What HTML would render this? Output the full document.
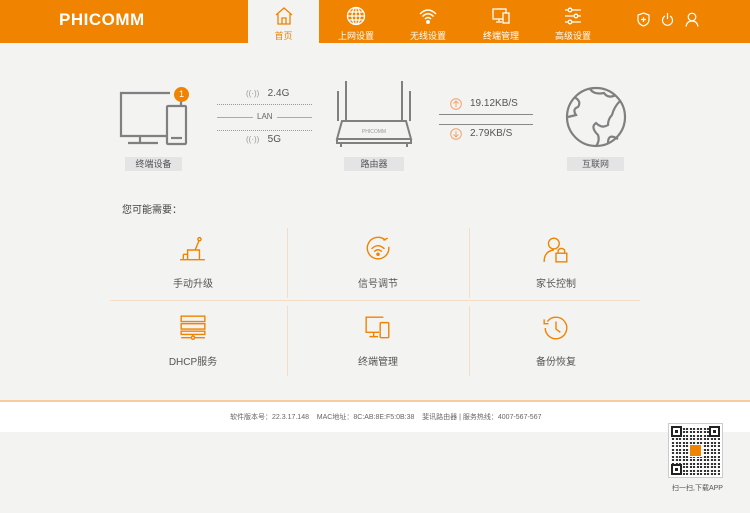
<!DOCTYPE html>
<html><head><meta charset="utf-8"><style>
*{margin:0;padding:0;box-sizing:border-box}
body{width:750px;height:513px;background:#f3f3f2;font-family:"Liberation Sans","Noto Sans CJK SC",sans-serif;position:relative;overflow:hidden;color:#555}
.hdr{position:absolute;left:0;top:0;width:750px;height:43px;background:#f08300}
.logo{position:absolute;left:59px;top:10px;color:#fff;font-weight:bold;font-size:17px;letter-spacing:0.5px}
.nav{position:absolute;top:0;height:43px;width:70px;text-align:center;color:#fff;font-size:9px}
.nav svg{display:block;margin:6px auto 3px}
.nav.act{background:#f3f3f2;color:#f08300;height:45px}
.hr{position:absolute;top:12px}
.abs{position:absolute}
.lbl{position:absolute;background:#e4e4e4;color:#555;font-size:9px;text-align:center;height:14px;line-height:14px}
.cell{position:absolute;width:160px;text-align:center;font-size:10px;color:#555}
.cell svg{display:block;margin:0 auto 11px}
</style></head><body>
<div class="hdr">
 <div class="logo">PHICOMM</div>
 <div class="nav act" style="left:248px;width:71px">
  <svg width="20" height="20" viewBox="0 0 20 20" fill="none" stroke="#f08300" stroke-width="1.3"><path d="M2 9 L10 2 L18 9 M4 8 V18 H16 V8 M8 18 V12 H12 V18"/></svg>首页</div>
 <div class="nav" style="left:321px">
  <svg width="20" height="20" viewBox="0 0 20 20" fill="none" stroke="#fff" stroke-width="1.3"><circle cx="10" cy="10" r="8.5"/><ellipse cx="10" cy="10" rx="4" ry="8.5"/><path d="M1.5 10H18.5M3 6H17M3 14H17M10 1.5V18.5"/></svg>上网设置</div>
 <div class="nav" style="left:393px">
  <svg width="20" height="20" viewBox="0 0 20 20" fill="none" stroke="#fff" stroke-width="1.5"><path d="M2 8 Q10 0 18 8 M4.5 10.5 Q10 5 15.5 10.5 M7 13 Q10 10 13 13"/><circle cx="10" cy="16" r="1.2" fill="#fff"/></svg>无线设置</div>
 <div class="nav" style="left:466px">
  <svg width="20" height="20" viewBox="0 0 20 20" fill="none" stroke="#fff" stroke-width="1.3"><rect x="2" y="3" width="13" height="10"/><path d="M8 13V16H5H11"/><rect x="12" y="7" width="6" height="10" fill="#f08300"/></svg>终端管理</div>
 <div class="nav" style="left:538px">
  <svg width="20" height="20" viewBox="0 0 20 20" fill="none" stroke="#fff" stroke-width="1.3"><path d="M2 4H18M2 10H18M2 16H18"/><circle cx="7" cy="4" r="1.8" fill="#f08300"/><circle cx="13" cy="10" r="1.8" fill="#f08300"/><circle cx="7" cy="16" r="1.8" fill="#f08300"/></svg>高级设置</div>
 <svg class="hr" style="left:637px" width="13" height="15" viewBox="0 0 13 15" fill="none" stroke="#fff" stroke-width="1.2"><path d="M6.5 1 L12 3 V8 Q12 12 6.5 14 Q1 12 1 8 V3Z M6.5 5V10M4 7.5H9"/></svg>
 <svg class="hr" style="left:661px" width="13" height="15" viewBox="0 0 13 15" fill="none" stroke="#fff" stroke-width="1.2"><path d="M4 4 A5 5 0 1 0 9 4 M6.5 1V7"/></svg>
 <svg class="hr" style="left:685px" width="14" height="15" viewBox="0 0 14 15" fill="none" stroke="#fff" stroke-width="1.2"><circle cx="7" cy="5" r="3.8"/><path d="M1 14.5 Q2 9 7 9 Q12 9 13 14.5"/></svg>
</div>

<svg class="abs" style="left:118px;top:86px" width="75" height="62" viewBox="0 0 75 62" fill="none" stroke="#808080" stroke-width="2.2"><path d="M52 7H3V50H48 M22 50V57H10H40"/><rect x="49" y="20" width="19" height="38" rx="1"/><path d="M53 52H64"/><path d="M63 14V20"/></svg>
<div class="abs" style="left:174px;top:87px;width:15px;height:15px;border-radius:50%;background:#f08300;color:#fff;font-size:9px;text-align:center;line-height:15px">1</div>
<div class="lbl" style="left:125px;top:157px;width:57px">终端设备</div>

<div class="abs" style="left:246px;top:88px;font-size:10px;color:#555"><span style="font-size:8px;color:#999">((·))</span>&nbsp;&nbsp;&nbsp;2.4G</div>
<div class="abs" style="left:217px;top:104px;width:95px;border-top:1px dotted #999"></div>
<div class="abs" style="left:217px;top:117px;width:95px;border-top:1px solid #aaa"></div>
<div class="abs" style="left:253px;top:112px;background:#f3f3f2;padding:0 4px;font-size:8px;color:#666">LAN</div>
<div class="abs" style="left:217px;top:130px;width:95px;border-top:1px dotted #999"></div>
<div class="abs" style="left:246px;top:134px;font-size:10px;color:#555"><span style="font-size:8px;color:#999">((·))</span>&nbsp;&nbsp;&nbsp;5G</div>

<svg class="abs" style="left:333px;top:79px" width="82" height="70" viewBox="0 0 82 70" fill="none" stroke="#808080" stroke-width="2"><path d="M5 12V42M13 2V42M69 2V42M77 12V42"/><path d="M9 42H73L78 60H4Z"/><path d="M4 60V64H78V60M8 64V68M74 64V68"/><text x="41" y="54" font-size="5" fill="#999" stroke="none" text-anchor="middle" font-family="Liberation Sans">PHICOMM</text></svg>
<div class="lbl" style="left:344px;top:157px;width:60px">路由器</div>

<svg class="abs" style="left:450px;top:98px" width="12" height="12" viewBox="0 0 12 12" fill="none" stroke="#f5a36a" stroke-width="1"><circle cx="6" cy="6" r="5.3"/><path d="M6 9V3M3.5 5.5L6 3L8.5 5.5"/></svg>
<div class="abs" style="left:470px;top:98px;font-size:10px;color:#555">19.12KB/S</div>
<div class="abs" style="left:439px;top:114px;width:94px;border-top:1px solid #888"></div>
<div class="abs" style="left:439px;top:124px;width:94px;border-top:1px solid #888"></div>
<svg class="abs" style="left:450px;top:128px" width="12" height="12" viewBox="0 0 12 12" fill="none" stroke="#f5a36a" stroke-width="1"><circle cx="6" cy="6" r="5.3"/><path d="M6 3V9M3.5 6.5L6 9L8.5 6.5"/></svg>
<div class="abs" style="left:470px;top:128px;font-size:10px;color:#555">2.79KB/S</div>

<svg class="abs" style="left:564px;top:85px" width="64" height="64" viewBox="0 0 64 64" fill="none" stroke="#808080" stroke-width="2.2"><circle cx="32" cy="32" r="29"/><path d="M10 12 Q18 16 14 22 Q8 24 12 30 L4 32 M26 4 Q30 10 40 8 Q44 14 52 10 M56 16 Q50 22 48 30 Q44 34 44 40 Q38 44 32 38 Q26 42 34 50 Q36 56 32 61 M44 58 Q44 50 50 52 L54 54"/></svg>
<div class="lbl" style="left:567px;top:157px;width:57px">互联网</div>

<div class="abs" style="left:122px;top:201px;font-size:10px;color:#444">您可能需要：</div>

<div class="abs" style="left:287px;top:228px;height:70px;border-left:1px solid #f6dcc4"></div>
<div class="abs" style="left:469px;top:228px;height:70px;border-left:1px solid #f6dcc4"></div>
<div class="abs" style="left:287px;top:306px;height:70px;border-left:1px solid #f6dcc4"></div>
<div class="abs" style="left:469px;top:306px;height:70px;border-left:1px solid #f6dcc4"></div>
<div class="abs" style="left:110px;top:300px;width:530px;border-top:1px solid #f6dcc4"></div>

<div class="cell" style="left:113px;top:236px"><svg width="28" height="28" viewBox="0 0 26 26" fill="none" stroke="#f08300" stroke-width="1.3"><circle cx="19" cy="3" r="1.5"/><path d="M18.5 4.5L15 13M8 13H19V22H8Z M4 17H8 M1 22H24"/><path d="M4 17V22"/></svg>手动升级</div>
<div class="cell" style="left:298px;top:236px"><svg width="28" height="28" viewBox="0 0 26 26" fill="none" stroke="#f08300" stroke-width="1.3"><path d="M20 4 A10 10 0 1 0 23 10 M18 4L22 2"/><path d="M7 12Q13 6 19 12M9.5 14.5Q13 11 16.5 14.5"/><circle cx="13" cy="17" r="1" fill="#f08300"/></svg>信号调节</div>
<div class="cell" style="left:476px;top:236px"><svg width="28" height="28" viewBox="0 0 26 26" fill="none" stroke="#f08300" stroke-width="1.3"><circle cx="11" cy="7" r="5"/><path d="M2 24Q2 14 11 13"/><rect x="13" y="16" width="10" height="8"/><path d="M15 16V13Q18 10 21 13V16"/></svg>家长控制</div>

<div class="cell" style="left:113px;top:314px"><svg width="28" height="28" viewBox="0 0 26 26" fill="none" stroke="#f08300" stroke-width="1.3"><rect x="2" y="2" width="22" height="5"/><rect x="2" y="9" width="22" height="5"/><path d="M2 16H24V19H2Z M13 19V22M2 22H24"/><circle cx="13" cy="22" r="1.5" fill="#f3f3f2"/></svg>DHCP服务</div>
<div class="cell" style="left:298px;top:314px"><svg width="28" height="28" viewBox="0 0 26 26" fill="none" stroke="#f08300" stroke-width="1.3"><path d="M18 3H2V17H14M9 17V21H5H13"/><rect x="15" y="8" width="8" height="14" rx="1"/></svg>终端管理</div>
<div class="cell" style="left:476px;top:314px"><svg width="28" height="28" viewBox="0 0 26 26" fill="none" stroke="#f08300" stroke-width="1.3"><path d="M5 7 A10 10 0 1 1 3 13 M2 5V9H6 M13 7V14L17 17"/></svg>备份恢复</div>

<div class="abs" style="left:0;top:400px;width:750px;height:32px;background:#fff;border-top:2px solid #f6cc9f"></div>
<div class="abs" style="left:230px;top:412px;font-size:7px;color:#666">软件版本号：22.3.17.148&nbsp;&nbsp;&nbsp;&nbsp;MAC地址：8C:AB:8E:F5:0B:38&nbsp;&nbsp;&nbsp;&nbsp;斐讯路由器 | 服务热线：4007-567-567</div>
<div class="abs" style="left:668px;top:423px;width:55px;height:55px;background:#fff;border:1px solid #ccc;padding:2px">
 <div style="width:100%;height:100%;background:repeating-linear-gradient(90deg,rgba(255,255,255,.9) 0 1px,transparent 1px 3px,rgba(255,255,255,.9) 3px 5px,transparent 5px 7px),repeating-linear-gradient(0deg,#333 0 2px,#fff 2px 3px,#333 3px 5px,#fff 5px 7px);position:relative">
  <div style="position:absolute;left:0;top:0;width:11px;height:11px;border:2px solid #222;background:#fff"><div style="margin:2px;width:3px;height:3px;background:#222"></div></div>
  <div style="position:absolute;right:0;top:0;width:11px;height:11px;border:2px solid #222;background:#fff"><div style="margin:2px;width:3px;height:3px;background:#222"></div></div>
  <div style="position:absolute;left:0;bottom:0;width:11px;height:11px;border:2px solid #222;background:#fff"><div style="margin:2px;width:3px;height:3px;background:#222"></div></div>
 </div>
 <div style="position:absolute;left:20px;top:20px;width:13px;height:13px;background:#f08300;border:1px solid #fff"></div>
</div>
<div class="abs" style="left:672px;top:483px;font-size:7px;color:#555">扫一扫,下载APP</div>
</body></html>
